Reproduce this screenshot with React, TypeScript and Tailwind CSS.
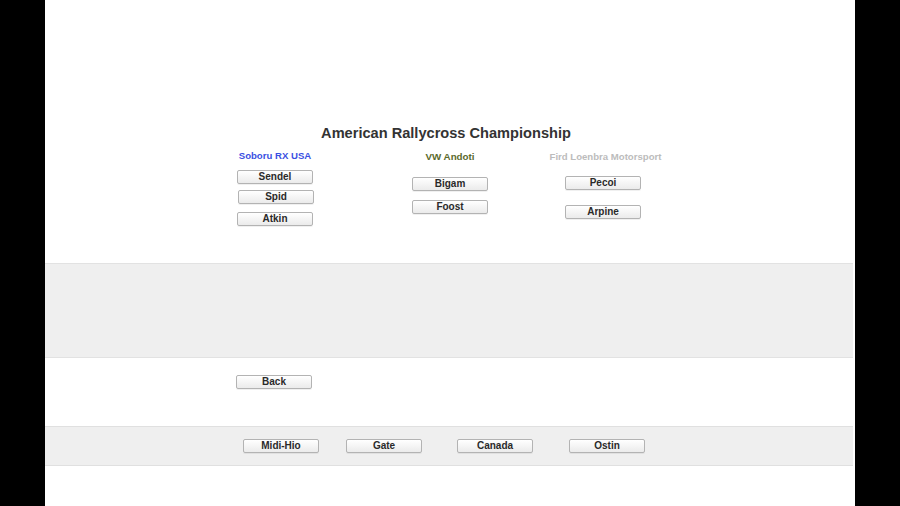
import React from "react";

function Btn({ label, className = "" }: { label: string; className?: string }) {
  return (
    <button
      className={`block w-[76px] h-[14px] shrink-0 rounded-[2px] border border-[#b3b3b3] bg-gradient-to-b from-white to-[#ebebeb] text-[10px] font-bold leading-none text-[#2a2a2a] shadow-[0_1px_0_rgba(0,0,0,0.06)] ${className}`}
    >
      {label}
    </button>
  );
}

export default function App() {
  return (
    <div
      className="flex h-[506px] w-[900px] bg-black"
      style={{ fontFamily: '"Liberation Sans", Arial, sans-serif' }}
    >
      <div className="ml-[45px] flex w-[810px] flex-col bg-white">
        <h1 className="mt-[124px] h-[18px] pr-[8px] text-center text-[14.6px] font-bold leading-[18px] text-[#333]">
          American Rallycross Championship
        </h1>

        <div className="mt-[7px] flex h-[114px] items-start">
          <div className="ml-[170px] flex w-[120px] flex-col items-center">
            <p className="mt-[1px] h-[12px] text-[9.6px] font-bold leading-[12px] text-[#3a4fe2]">
              Soboru RX USA
            </p>
            <Btn label="Sendel" className="mt-[8px]" />
            <Btn label="Spid" className="mt-[6px] ml-[2px]" />
            <Btn label="Atkin" className="mt-[8px]" />
          </div>
          <div className="ml-[55px] flex w-[120px] flex-col items-center">
            <p className="mt-[2px] h-[12px] text-[9.8px] font-bold leading-[12px] text-[#5c6a2c]">
              VW Andoti
            </p>
            <Btn label="Bigam" className="mt-[14px]" />
            <Btn label="Foost" className="mt-[9px]" />
          </div>
          <div className="ml-[34px] flex w-[120px] flex-col items-center">
            <p className="mt-[2px] h-[12px] whitespace-nowrap pl-[3px] text-[9.6px] font-bold leading-[12px] text-[#bcbcbc]">
              Fird Loenbra Motorsport
            </p>
            <Btn label="Pecoi" className="mt-[13px] -ml-[2px]" />
            <Btn label="Arpine" className="mt-[15px] -ml-[2px]" />
          </div>
        </div>

        <div className="mr-[2px] h-[95px] border-y border-[#e2e2e2] bg-[#efefef]" />

        <div className="flex h-[68px] items-start pt-[17px]">
          <Btn label="Back" className="ml-[191px]" />
        </div>

        <div className="mr-[2px] flex h-[40px] items-start border-y border-[#e0e0e0] bg-[#efefef] pt-[12px]">
          <Btn label="Midi-Hio" className="ml-[198px]" />
          <Btn label="Gate" className="ml-[27px]" />
          <Btn label="Canada" className="ml-[35px]" />
          <Btn label="Ostin" className="ml-[36px]" />
        </div>

        <div className="flex-1" />
      </div>
    </div>
  );
}
